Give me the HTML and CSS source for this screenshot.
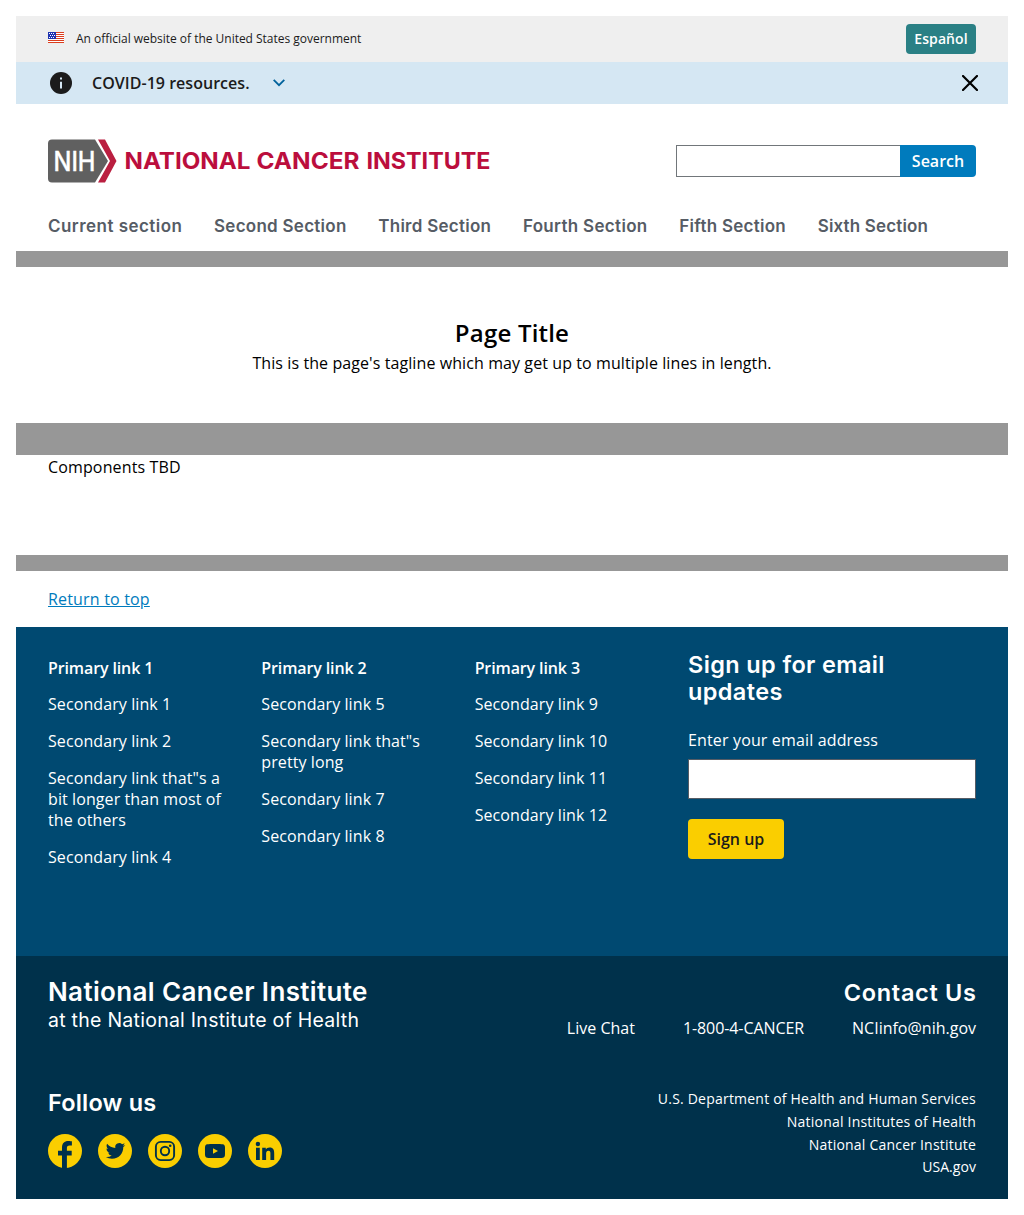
FILE: index.html
```html
<!DOCTYPE html>
<html lang="en">
<head>
<meta charset="utf-8">
<title>National Cancer Institute</title>
<link rel="stylesheet" href="styles.css">
</head>
<body>
<div class="gov-banner">
  <svg class="flag" viewBox="0 0 16 11" width="16" height="11" shape-rendering="crispEdges"><path fill="#fff" d="M0 0h16v11H0z"/><path fill="#db3e1f" d="M0 0h16v1H0zM0 2h16v1H0zM0 4h16v1H0zM0 6h16v1H0zM0 8h16v1H0zM0 10h16v1H0z"/><path fill="#1e33b1" d="M0 0h8v7H0z"/><path fill="#fff" d="M1 1h1v1H1zM3 1h1v1H3zM5 1h1v1H5zM2 3h1v1H2zM4 3h1v1H4zM6 3h1v1H6zM1 5h1v1H1zM3 5h1v1H3zM5 5h1v1H5z"/></svg>
  <span class="gov-text">An official website of the United States government</span>
  <a class="lang">Español</a>
</div>
<div class="alert">
  <svg class="info" viewBox="0 0 22 22" width="22" height="22"><circle cx="11" cy="11" r="11" fill="#1b1b1b"/><path fill="#d5e7f3" d="M10 5.500h2v2h-2zM10 9.800h2v6.700h-2z"/></svg>
  <span class="alert-text">COVID-19 resources.</span>
  <svg class="chevron" viewBox="0 0 12 8" width="12" height="8"><path d="M.7.9 6 6.200 11.300.9" fill="none" stroke="#00629b" stroke-width="1.800"/></svg>
  <svg class="close" viewBox="0 0 16 16" width="16" height="16"><path d="M1 1l14 14M15 1 1 15" fill="none" stroke="#000" stroke-width="2.200" stroke-linecap="round"/></svg>
</div>
<header class="header">
  <div class="masthead">
    <svg class="logo" viewBox="0 0.500 444 44" width="444" height="44">
      <path fill="#606060" d="M4 0H47L60 21.500 47 43H4Q0 43 0 39V4Q0 0 4 0z"/>
      <path fill="#ba1f40" d="M50 0h7l11.500 21.500L57 43h-7l12-21.500z"/>
      <text class="nih" x="5.500" y="31.200" textLength="42" lengthAdjust="spacingAndGlyphs">NIH</text>
      <text class="nci" x="76.500" y="29.800" textLength="126" lengthAdjust="spacingAndGlyphs">NATIONAL</text>
      <text class="nci" x="208.500" y="29.800" textLength="103" lengthAdjust="spacingAndGlyphs">CANCER</text>
      <text class="nci" x="318.500" y="29.800" textLength="124" lengthAdjust="spacingAndGlyphs">INSTITUTE</text>
    </svg>
    <form class="search"><input class="search-input" type="text" aria-label="Search"><button class="search-button" type="button">Search</button></form>
  </div>
  <nav class="nav"><a class="current">Current section</a><a>Second Section</a><a>Third Section</a><a class="fourth">Fourth Section</a><a>Fifth Section</a><a class="sixth">Sixth Section</a></nav>
</header>
<div class="band"></div>
<section class="hero"><h1 class="title">Page Title</h1><p class="tagline">This is the page's tagline which may get up to multiple lines in length.</p></section>
<div class="band band-tall"></div>
<main class="components">Components TBD</main>
<div class="band"></div>
<div class="return"><a>Return to top</a></div>
<footer>
  <div class="footer-primary">
    <ul class="links"><li class="primary">Primary link 1</li><li>Secondary link 1</li><li>Secondary link 2</li><li>Secondary link that"s a bit longer than most of the others</li><li>Secondary link 4</li></ul>
    <ul class="links"><li class="primary">Primary link 2</li><li>Secondary link 5</li><li>Secondary link that"s pretty long</li><li>Secondary link 7</li><li>Secondary link 8</li></ul>
    <ul class="links"><li class="primary">Primary link 3</li><li>Secondary link 9</li><li>Secondary link 10</li><li>Secondary link 11</li><li>Secondary link 12</li></ul>
    <form class="signup">
      <h2 class="heading signup-heading">Sign up for email<br>updates</h2>
      <label class="email-label" for="email">Enter your email address</label>
      <input class="email" id="email" type="email">
      <button class="signup-button" type="button">Sign up</button>
    </form>
  </div>
  <div class="footer-secondary">
    <div class="row identity">
      <div><h2 class="heading org">National Cancer Institute</h2><p class="suborg">at the National Institute of Health</p></div>
      <div class="contact"><h2 class="heading contact-heading">Contact Us</h2><div class="contact-links"><a>Live Chat</a><a class="phone">1-800-4-CANCER</a><a>NCIinfo@nih.gov</a></div></div>
    </div>
    <div class="row">
      <div><h2 class="heading follow">Follow us</h2>
        <div class="social">
          <svg viewBox="0 0 34 34"><circle cx="17" cy="17" r="17"/><path class="cut" d="M14 34V21.600H10v-4.900h4v-3.200c0-4.300 2.400-6.500 6.200-6.500 1.900 0 3.700.3 3.700.3v4.100h-2.200c-2.200 0-2.800 1.200-2.800 2.500v2.800h4.800v4.900h-4.800V34z"/></svg>
          <svg viewBox="0 0 34 34"><circle cx="17" cy="17" r="17"/><path class="cut" transform="translate(7.800 7.200) scale(.81)" d="M23.950 4.570a10 10 0 0 1-2.820.77 4.960 4.960 0 0 0 2.160-2.720c-.95.550-2 .95-3.130 1.180a4.920 4.920 0 0 0-8.380 4.480C7.690 8.090 4.070 6.130 1.640 3.160a4.820 4.820 0 0 0-.67 2.480c0 1.710.87 3.210 2.190 4.100a4.900 4.900 0 0 1-2.230-.62v.06a4.920 4.920 0 0 0 3.950 4.830 5 5 0 0 1-2.210.08 4.940 4.940 0 0 0 4.600 3.420A9.870 9.870 0 0 1 0 19.540a13.990 13.990 0 0 0 7.550 2.210c9.050 0 14-7.500 14-13.980 0-.21 0-.42-.02-.63a9.940 9.940 0 0 0 2.420-2.570z"/></svg>
          <svg viewBox="0 0 34 34"><circle cx="17" cy="17" r="17"/><rect class="line" x="7.900" y="7.900" width="18.200" height="18.200" rx="4.800"/><circle class="line" cx="17" cy="17" r="4.200"/><circle class="cut" cx="22.200" cy="11.800" r="1.300"/></svg>
          <svg viewBox="0 0 34 34"><circle cx="17" cy="17" r="17"/><path class="cut" d="M17 9.900c-4 0-6.400.1-7.800.4-1.300.3-1.900 1-2.100 2.200C6.900 13.600 7 15 7 17s-.1 3.400.1 4.500c.2 1.200.8 1.900 2.100 2.200 1.400.3 3.800.4 7.800.4s6.400-.1 7.800-.4c1.300-.3 1.900-1 2.100-2.200.2-1.100.1-2.500.1-4.500s.1-3.400-.1-4.500c-.2-1.200-.8-1.900-2.100-2.200-1.400-.3-3.800-.4-7.800-.4z"/><path d="m15 14.200 5 2.800-5 2.800z"/></svg>
          <svg viewBox="0 0 34 34"><circle cx="17" cy="17" r="17"/><circle class="cut" cx="9.900" cy="10" r="2.200"/><path class="cut" d="M8 13.800h3.800V26H8zM14.200 13.800h3.600v1.700c.6-1.100 1.900-2 3.800-2 3.900 0 4.600 2.500 4.600 5.800V26h-3.800v-6c0-1.400 0-3.200-2-3.200-1.900 0-2.300 1.500-2.300 3.100V26h-3.900z"/></svg>
        </div>
      </div>
      <div class="agencies"><a>U.S. Department of Health and Human Services</a><a>National Institutes of Health</a><a>National Cancer Institute</a><a class="usa">USA.gov</a></div>
    </div>
  </div>
</footer>
</body>
</html>
```
FILE: styles.css
```css
* { box-sizing: border-box; }
body { margin: 16px; background: #fff; color: #000; font: 16px/24px "Open Sans", sans-serif; }
h1, h2, p, ul { margin: 0; padding: 0; }
svg { display: block; flex: none; }
button { border: 0; font: inherit; font-weight: 600; padding: 0; }
.gov-banner { height: 46px; padding: 0 32px; background: #efefef; display: flex; align-items: center; }
.flag { margin: 0 12px 3px 0; }
.gov-text { font-size: 12px; color: #1b1b1b; letter-spacing: -.02px; }
.lang { margin-left: auto; width: 70px; height: 30px; border-radius: 4px; background: #2a8085; color: #fff; font-weight: 600; font-size: 14px; line-height: 30px; text-align: center; letter-spacing: .1px; }
.alert { height: 42px; padding: 0 30px 0 34px; background: #d5e7f3; color: #1b1b1b; display: flex; align-items: center; }
.alert-text { margin: 0 23px 0 20px; font-weight: 600; letter-spacing: .03px; }
.close { margin-left: auto; }
.header { height: 147px; padding: 36px 32px 0; }
.masthead { display: flex; justify-content: space-between; height: 77px; }
.logo { overflow: visible; }
.nih { font: 500 26.500px Inter, sans-serif; fill: #fff; stroke: #fff; stroke-width: .3px; }
.nci { font: 700 23px Inter, sans-serif; fill: #bb0e3d; }
.search { display: flex; margin-top: 5px; height: 32px; }
.search-input { width: 224px; border: 1px solid #71767a; border-right: 0; padding: 0 8px; }
.search-button { width: 76px; background: #007bbd; color: #fff; border-radius: 0 4px 4px 0; }
.nav { display: flex; gap: 31.700px; padding-top: 1px; font: 600 17px/16px Inter, sans-serif; color: #565c65; letter-spacing: .26px; white-space: nowrap; }
.current { letter-spacing: .46px; }
.fourth { letter-spacing: .32px; }
.sixth { letter-spacing: .15px; }
.band { height: 16px; background: #979797; }
.band-tall { height: 32px; }
.hero { height: 156px; padding-top: 49px; text-align: center; }
.title { font-size: 24px; line-height: 34px; font-weight: 600; letter-spacing: .2px; }
.tagline { padding-top: 1px; letter-spacing: .09px; }
.components { height: 100px; padding: 0 32px; letter-spacing: .14px; }
.return { height: 56px; padding: 16px 32px; color: #007bbd; text-decoration: underline; letter-spacing: .18px; }
.footer-primary { height: 329px; padding: 24px 32px; background: #004971; color: #fff; display: grid; grid-template-columns: repeat(3, 1fr) 288px; gap: 32px; }
.links { list-style: none; padding-top: 7px; display: flex; flex-direction: column; gap: 16px; line-height: 21px; letter-spacing: .09px; }
.primary { font-weight: 600; margin-bottom: -1px; letter-spacing: -.12px; }
.heading { font: 600 23px/27px Inter, sans-serif; color: #fff; }
.signup { display: flex; flex-direction: column; align-items: flex-start; }
.signup-heading { font-size: 23.500px; letter-spacing: .38px; }
.email-label { margin-top: 23px; line-height: 24px; letter-spacing: .15px; }
.email { margin-top: 7px; width: 288px; height: 40px; border: 1px solid #565c65; background: #fff; }
.signup-button { margin-top: 20px; width: 96px; height: 40px; border-radius: 4px; background: #face00; color: #1b1b1b; }
.footer-secondary { height: 243px; padding: 22px 32px 0; background: #00314b; color: #fff; }
.row { display: flex; justify-content: space-between; }
.identity { height: 109px; }
.org { font-size: 26px; letter-spacing: .36px; }
.suborg { font: 400 19.500px/31px Inter, sans-serif; letter-spacing: .26px; }
.contact { text-align: right; }
.contact-heading { font-size: 23.500px; line-height: 29px; letter-spacing: .7px; margin-right: -.7px; }
.contact-links { display: flex; gap: 48px; margin-top: 9px; }
.phone { letter-spacing: -.08px; }
.follow { font-size: 23.500px; line-height: 31px; letter-spacing: .2px; }
.social { display: flex; gap: 16px; margin-top: 16px; }
.social svg { width: 34px; height: 34px; fill: #face00; }
.social .cut { fill: #00314b; }
.social .line { fill: none; stroke: #00314b; stroke-width: 1.900; }
.agencies { display: flex; flex-direction: column; padding-top: 1px; text-align: right; font-size: 14px; line-height: 22.800px; letter-spacing: .21px; }
.usa { letter-spacing: .05px; }
```
